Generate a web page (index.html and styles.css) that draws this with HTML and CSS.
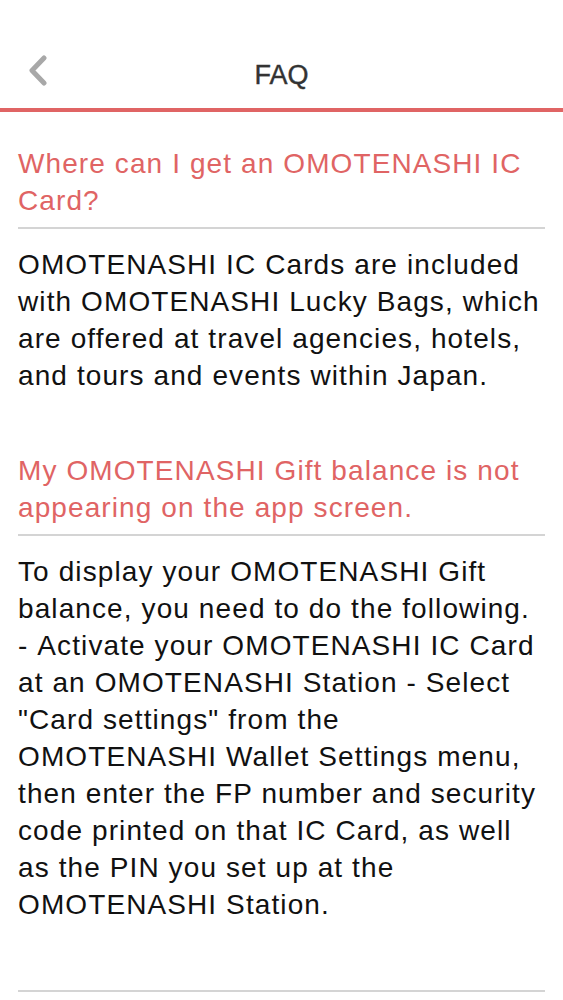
FILE: index.html
```html
<!DOCTYPE html>
<html>
<head>
<meta charset="utf-8">
<link rel="stylesheet" href="styles.css">
</head>
<body>
<header class="bar">
  <span class="back"><svg width="21" height="31" viewBox="0 0 21 31"><path d="M17 3 L5 15.5 L17 28" fill="none" stroke="#a8a8a8" stroke-width="5" stroke-linecap="round" stroke-linejoin="round"/></svg></span>
  <h1 class="title">FAQ</h1>
</header>
<main class="list">
  <section class="item">
    <h2 class="q">Where can I get an OMOTENASHI IC Card?</h2>
    <p class="a">OMOTENASHI IC Cards are included with OMOTENASHI Lucky Bags, which are offered at travel agencies, hotels, and tours and events within Japan.</p>
  </section>
  <section class="item last">
    <h2 class="q">My OMOTENASHI Gift balance is not appearing on the app screen.</h2>
    <p class="a">To display your OMOTENASHI Gift balance, you need to do the following. -&nbsp;Activate your OMOTENASHI IC Card at an OMOTENASHI Station -&nbsp;Select "Card settings" from the OMOTENASHI Wallet Settings menu, then enter the FP number and security code printed on that IC Card, as well as the PIN you set up at the OMOTENASHI Station.</p>
  </section>
</main>
</body>
</html>
```
FILE: styles.css
```css
* { box-sizing: border-box; }
html, body { margin: 0; padding: 0; background: #fff; }
body { font-family: "Liberation Sans", Arial, sans-serif; width: 563px; }
.bar {
  position: relative;
  height: 112px;
  border-bottom: 4px solid #e06464;
  display: flex;
  align-items: center;
  justify-content: center;
}
.back { position: absolute; left: 27px; top: 55px; display: block; line-height: 0; }
.title { margin: 0; padding-top: 43px; font-size: 27px; font-weight: normal; color: #333; -webkit-text-stroke: 0.4px #333; }
.list { padding: 0 18px; }
.item { padding-top: 33px; }
.q, .a { letter-spacing: 1.1px; font-size: 28px; line-height: 37px; margin: 0; }
.q {
  font-weight: normal;
  color: #e06464;
  padding-bottom: 8px;
  border-bottom: 2px solid #d4d4d4;
}
.a {
  padding-top: 17px;
  color: #111;
}
.last .a { padding-bottom: 67px; border-bottom: 2px solid #d4d4d4; }
.item + .item { padding-top: 58px; }
```
